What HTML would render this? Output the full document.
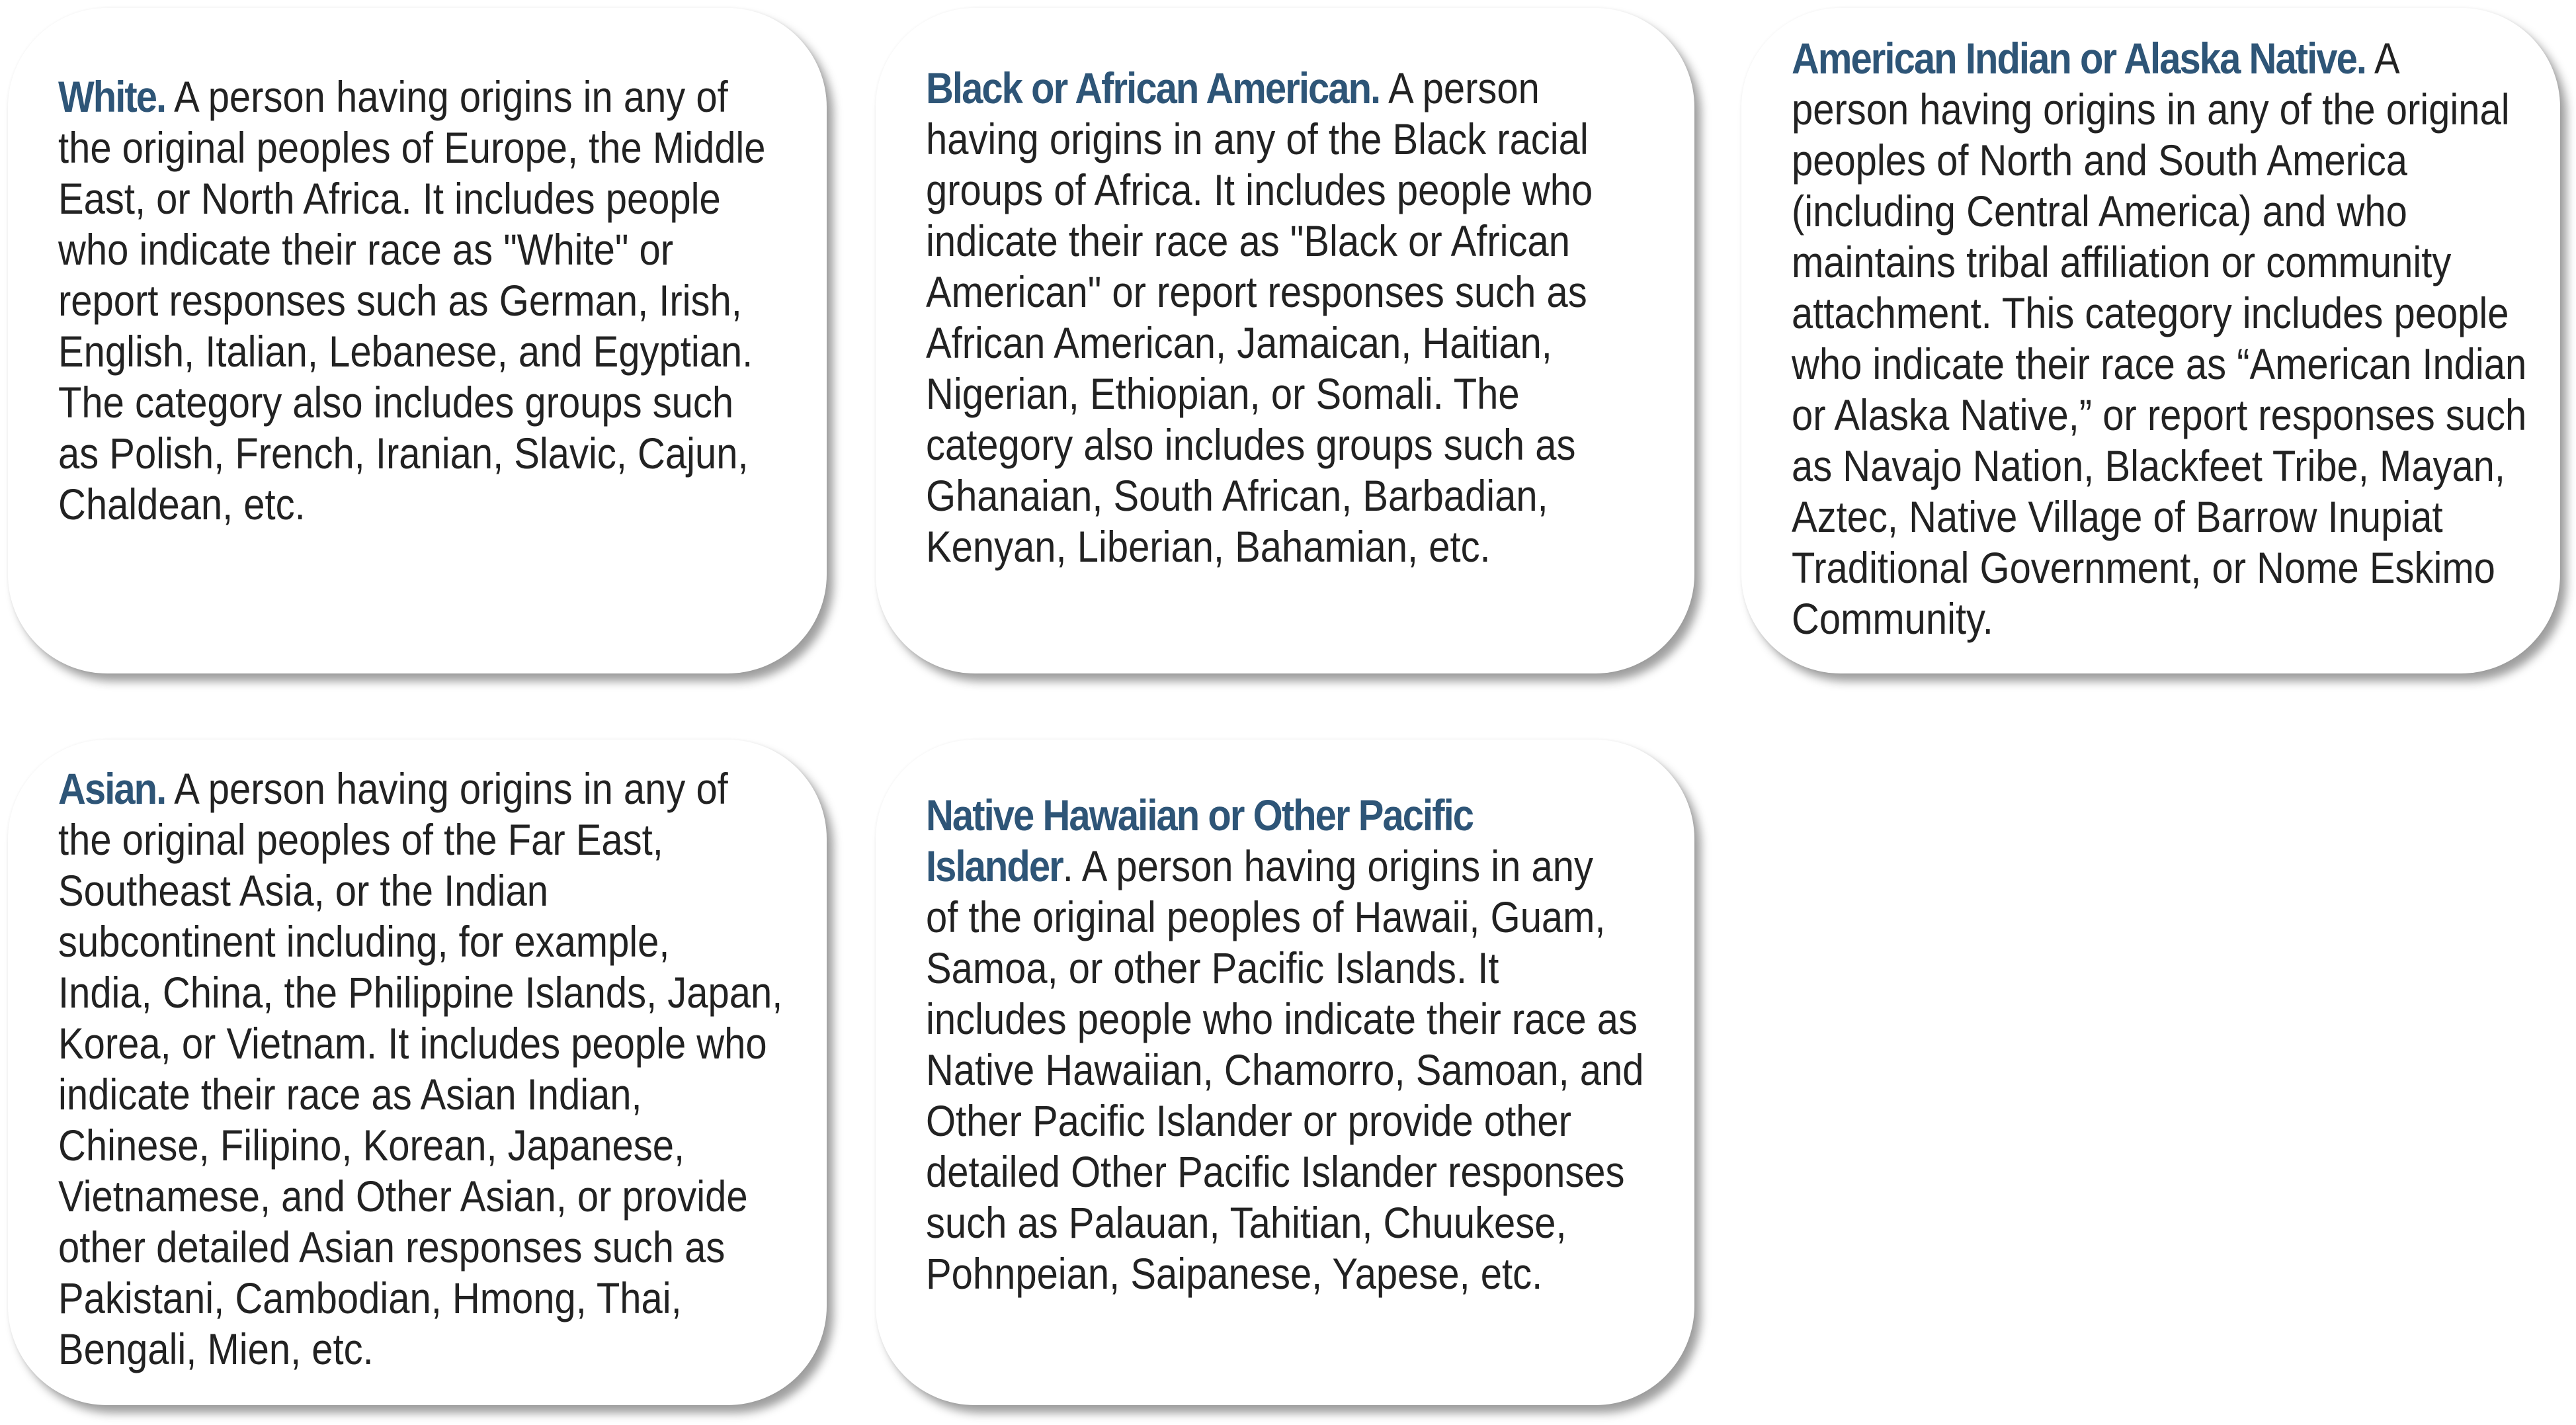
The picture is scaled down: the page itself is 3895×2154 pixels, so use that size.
<!DOCTYPE html>
<html><head><meta charset="utf-8"><style>
html,body{margin:0;padding:0;background:#fff;}
body{width:3895px;height:2154px;position:relative;overflow:hidden;font-family:"Liberation Sans",sans-serif;}
.c{position:absolute;width:1238px;height:1006px;background:#fff;border-radius:150px;box-shadow:10px 12px 14px rgba(0,0,0,0.38),0 0 4px rgba(0,0,0,0.06);}
.t{position:absolute;left:76px;font-size:66px;line-height:77px;color:#222;white-space:nowrap;transform:scaleX(0.878);transform-origin:0 0;}
b{color:#2e5577;letter-spacing:-2.2px;}
</style></head><body>
<div class="c" style="left:12px;top:12px"><div class="t" style="top:96px"><b>White.</b> A person having origins in any of<br>the original peoples of Europe, the Middle<br>East, or North Africa. It includes people<br>who indicate their race as "White" or<br>report responses such as German, Irish,<br>English, Italian, Lebanese, and Egyptian.<br>The category also includes groups such<br>as Polish, French, Iranian, Slavic, Cajun,<br>Chaldean, etc.</div></div>
<div class="c" style="left:1324px;top:12px"><div class="t" style="top:83px"><b>Black or African American.</b> A person<br>having origins in any of the Black racial<br>groups of Africa. It includes people who<br>indicate their race as "Black or African<br>American" or report responses such as<br>African American, Jamaican, Haitian,<br>Nigerian, Ethiopian, or Somali. The<br>category also includes groups such as<br>Ghanaian, South African, Barbadian,<br>Kenyan, Liberian, Bahamian, etc.</div></div>
<div class="c" style="left:2633px;top:12px"><div class="t" style="top:38px"><b>American Indian or Alaska Native.</b> A<br>person having origins in any of the original<br>peoples of North and South America<br>(including Central America) and who<br>maintains tribal affiliation or community<br>attachment. This category includes people<br>who indicate their race as “American Indian<br>or Alaska Native,” or report responses such<br>as Navajo Nation, Blackfeet Tribe, Mayan,<br>Aztec, Native Village of Barrow Inupiat<br>Traditional Government, or Nome Eskimo<br>Community.</div></div>
<div class="c" style="left:12px;top:1118px"><div class="t" style="top:36px"><b>Asian.</b> A person having origins in any of<br>the original peoples of the Far East,<br>Southeast Asia, or the Indian<br>subcontinent including, for example,<br>India, China, the Philippine Islands, Japan,<br>Korea, or Vietnam. It includes people who<br>indicate their race as Asian Indian,<br>Chinese, Filipino, Korean, Japanese,<br>Vietnamese, and Other Asian, or provide<br>other detailed Asian responses such as<br>Pakistani, Cambodian, Hmong, Thai,<br>Bengali, Mien, etc.</div></div>
<div class="c" style="left:1324px;top:1118px"><div class="t" style="top:76px"><b>Native Hawaiian or Other Pacific<br>Islander</b>. A person having origins in any<br>of the original peoples of Hawaii, Guam,<br>Samoa, or other Pacific Islands. It<br>includes people who indicate their race as<br>Native Hawaiian, Chamorro, Samoan, and<br>Other Pacific Islander or provide other<br>detailed Other Pacific Islander responses<br>such as Palauan, Tahitian, Chuukese,<br>Pohnpeian, Saipanese, Yapese, etc.</div></div>
</body></html>
